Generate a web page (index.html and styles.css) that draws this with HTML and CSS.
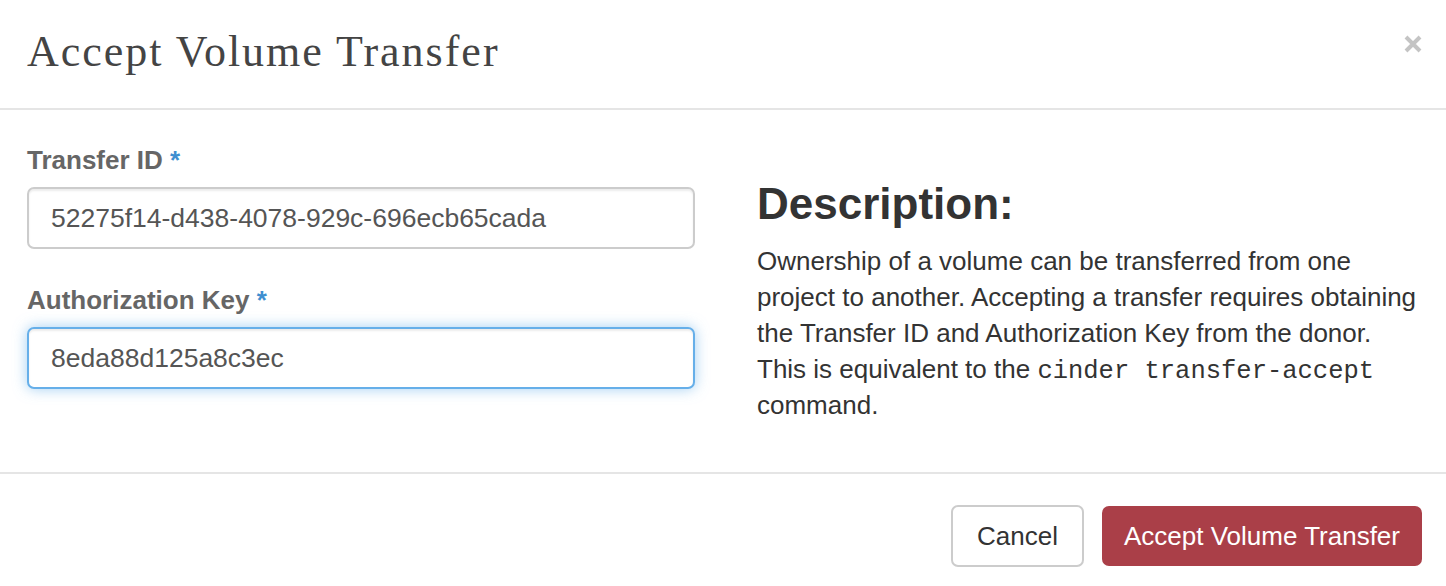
FILE: index.html
```html
<!DOCTYPE html>
<html lang="en">
<head>
<meta charset="utf-8">
<title>Accept Volume Transfer</title>
<link rel="stylesheet" href="styles.css">
</head>
<body>
<div class="modal">
  <div class="modal-header">
    <h3 class="modal-title">Accept Volume Transfer</h3>
    <button class="close" type="button" aria-label="Close">
      <svg width="18" height="18" viewBox="0 0 18 18"><path d="M2 2 L16 16 M16 2 L2 16" stroke="#c4c4c4" stroke-width="4" stroke-linecap="butt"/></svg>
    </button>
  </div>
  <div class="modal-body">
    <div class="form-col">
      <div class="form-group">
        <label class="control-label">Transfer ID <span class="req">*</span></label>
        <input class="form-control" type="text" value="52275f14-d438-4078-929c-696ecb65cada">
      </div>
      <div class="form-group">
        <label class="control-label">Authorization Key <span class="req">*</span></label>
        <input class="form-control focused" type="text" value="8eda88d125a8c3ec">
      </div>
    </div>
    <div class="desc-col">
      <h3 class="desc-title">Description:</h3>
      <p class="desc-text">Ownership of a volume can be transferred from one project to another. Accepting a transfer requires obtaining the Transfer ID and Authorization Key from the donor. This is equivalent to the <code class="cmd">cinder transfer-accept</code> command.</p>
    </div>
  </div>
  <div class="modal-footer">
    <button class="btn btn-default" type="button">Cancel</button>
    <button class="btn btn-primary" type="button">Accept Volume Transfer</button>
  </div>
</div>
</body>
</html>
```

FILE: styles.css
```css
html, body {
  margin: 0;
  padding: 0;
  background: #ffffff;
}

body {
  font-family: "Liberation Sans", Arial, Helvetica, sans-serif;
  font-size: 26px;
  line-height: 36px;
  color: #333333;
  overflow: hidden;
}

.modal {
  width: 1446px;
  background: #ffffff;
}

.modal-header {
  display: flex;
  align-items: flex-start;
  justify-content: space-between;
  padding: 28px 24px 0 27px;
  height: 80px;
  border-bottom: 2px solid #e5e5e5;
}

.modal-title {
  margin: 0;
  font-family: "Liberation Serif", "Times New Roman", serif;
  font-weight: normal;
  font-size: 44px;
  line-height: 48px;
  letter-spacing: 2px;
  color: #444444;
}

.close {
  margin-top: 7px;
  padding: 0;
  border: 0;
  background: transparent;
  width: 18px;
  height: 18px;
  cursor: pointer;
  display: flex;
}

.modal-body {
  display: grid;
  grid-template-columns: 668px 664px;
  column-gap: 62px;
  padding: 32px 25px 49px 27px;
}

.form-group {
  margin-bottom: 33px;
}

.form-group:last-child {
  margin-bottom: 0;
}

.control-label {
  display: block;
  font-weight: bold;
  font-size: 26px;
  line-height: 36px;
  color: #666666;
  margin-bottom: 9px;
}

.req {
  color: #3f8fd0;
}

.form-control {
  display: block;
  box-sizing: border-box;
  width: 100%;
  height: 62px;
  padding: 0 22px;
  font-family: "Liberation Sans", Arial, Helvetica, sans-serif;
  font-size: 26.5px;
  color: #555555;
  background: #ffffff;
  border: 2px solid #cccccc;
  border-radius: 7px;
  box-shadow: inset 0 2px 2px rgba(0, 0, 0, 0.075);
  outline: none;
}

.form-control.focused {
  border-color: #66afe9;
  box-shadow: inset 0 2px 2px rgba(0, 0, 0, 0.075), 0 0 14px rgba(102, 175, 233, 0.6);
}

.desc-col {
  margin-top: 38px;
}

.desc-title {
  margin: 0 0 16px 0;
  font-size: 44px;
  line-height: 47px;
  font-weight: bold;
  color: #333333;
}

.desc-text {
  margin: 0;
  font-size: 26px;
  line-height: 36px;
  color: #333333;
}

.cmd {
  font-family: "Liberation Mono", "Courier New", monospace;
  font-size: 25.5px;
  line-height: 1;
  color: #333333;
}

.modal-footer {
  display: flex;
  justify-content: flex-end;
  align-items: center;
  gap: 18px;
  padding: 31px 24px 20px 27px;
  border-top: 2px solid #e5e5e5;
}

.btn {
  font-family: "Liberation Sans", Arial, Helvetica, sans-serif;
  font-size: 26px;
  line-height: 36px;
  border-radius: 7px;
  cursor: pointer;
  box-sizing: border-box;
}

.btn-default {
  height: 62px;
  padding: 0 24px;
  color: #333333;
  background: #ffffff;
  border: 2px solid #cccccc;
}

.btn-primary {
  height: 60px;
  padding: 0 22px;
  color: #ffffff;
  background: #aa3f48;
  border: none;
}
```
